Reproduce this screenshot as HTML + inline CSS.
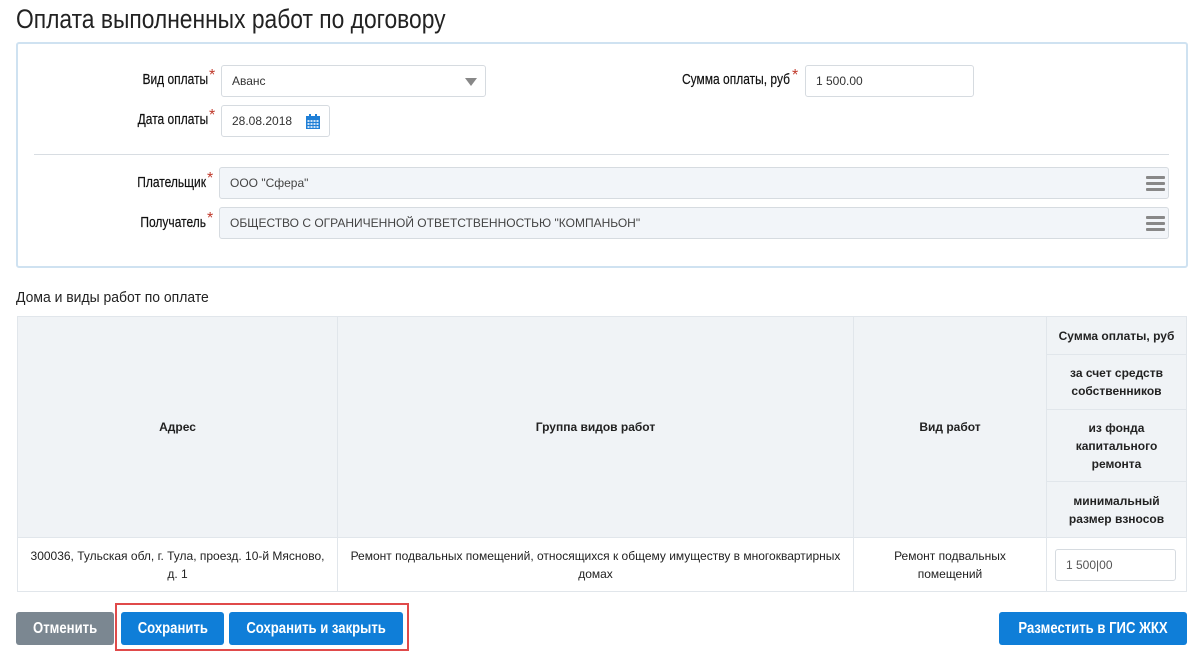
<!DOCTYPE html>
<html><head><meta charset="utf-8"><style>
*{box-sizing:border-box;margin:0;padding:0}
body{width:1201px;height:656px;background:#fff;font-family:"Liberation Sans",sans-serif;color:#222;position:relative;overflow:hidden}
.abs{position:absolute}
.n{display:inline-block;transform:scaleX(.82);transform-origin:left center;white-space:nowrap}
.nr{display:inline-block;transform:scaleX(.8);transform-origin:right center;white-space:nowrap}
.nc{display:inline-block;transform:scaleX(.82);transform-origin:center center;white-space:nowrap}
.lbl{font-size:15px;color:#111;text-align:right;-webkit-text-stroke:0.2px #111}
.st{position:absolute;z-index:5;color:#c0392b;font-size:16px;line-height:16px}
.inp{border:1px solid #d6dbe0;border-radius:3px;background:#fff;font-size:12px;color:#333;padding-left:10px;line-height:30px}
.ro{background:#f2f5f9;border:1px solid #d6dbe0;border-radius:3px;font-size:12px;color:#444;padding-left:10px;line-height:30px}
.ham{position:absolute;right:3px;top:8px;width:19px}
.ham i{display:block;height:3px;background:#888;margin-bottom:3px;border-radius:1px}
table{border-collapse:collapse;position:absolute;left:17px;top:316px;width:1170px}
td{border:1px solid #e1e6eb;text-align:center;font-size:12px;font-weight:bold;color:#222;background:#f0f3f6;line-height:18px}
tr.d td{background:#fff;font-weight:normal;font-size:12px}
.btn{position:absolute;top:612px;height:33px;border-radius:3px;color:#fff;font-size:16px;line-height:33px;text-align:center;font-weight:bold}
</style></head><body>
<div class="abs" style="left:16px;top:3px;font-size:27px;line-height:32px;color:#222"><span class="n" style="transform:scaleX(.845)">Оплата выполненных работ по договору</span></div>
<div class="abs" style="left:16px;top:42px;width:1172px;height:226px;border:2px solid #cfe2f1;border-radius:3px"></div>

<div class="abs lbl" style="left:40px;top:71px;width:168px"><span class="nr">Вид оплаты</span></div>
<div class="abs inp" style="left:221px;top:65px;width:265px;height:32px">Аванс
<div class="abs" style="right:8px;top:12px;width:0;height:0;border-left:6px solid transparent;border-right:6px solid transparent;border-top:8px solid #888"></div></div>
<div class="abs lbl" style="left:40px;top:111px;width:168px"><span class="nr">Дата оплаты</span></div>
<div class="abs inp" style="left:221px;top:105px;width:109px;height:32px">28.08.2018
<svg class="abs" style="left:84px;top:8px" width="14" height="15" viewBox="0 0 14 15"><rect x="0" y="2" width="14" height="13" fill="#1f7fd6"/><rect x="3" y="0" width="2" height="3" fill="#1f7fd6"/><rect x="9" y="0" width="2" height="3" fill="#1f7fd6"/><g fill="#cfe3f7"><rect x="1.5" y="6" width="2" height="2"/><rect x="4.5" y="6" width="2" height="2"/><rect x="7.5" y="6" width="2" height="2"/><rect x="10.5" y="6" width="2" height="2"/><rect x="1.5" y="9" width="2" height="2"/><rect x="4.5" y="9" width="2" height="2"/><rect x="7.5" y="9" width="2" height="2"/><rect x="10.5" y="9" width="2" height="2"/><rect x="1.5" y="12" width="2" height="2"/><rect x="4.5" y="12" width="2" height="2"/><rect x="7.5" y="12" width="2" height="2"/><rect x="10.5" y="12" width="2" height="2"/></g></svg></div>
<div class="abs lbl" style="left:560px;top:71px;width:230px"><span class="nr">Сумма оплаты, руб</span></div>
<div class="abs inp" style="left:805px;top:65px;width:169px;height:32px">1 500.00</div>

<div class="abs" style="left:34px;top:154px;width:1135px;height:1px;background:#d8dde2"></div>

<div class="abs lbl" style="left:40px;top:174px;width:166px"><span class="nr">Плательщик</span></div>
<div class="abs ro" style="left:219px;top:167px;width:950px;height:32px">ООО "Сфера"<div class="ham"><i></i><i></i><i></i></div></div>
<div class="abs lbl" style="left:40px;top:214px;width:166px"><span class="nr">Получатель</span></div>
<div class="abs ro" style="left:219px;top:207px;width:950px;height:32px">ОБЩЕСТВО С ОГРАНИЧЕННОЙ ОТВЕТСТВЕННОСТЬЮ "КОМПАНЬОН"<div class="ham"><i></i><i></i><i></i></div></div>

<span class="st" style="left:209px;top:68px">*</span>
<span class="st" style="left:209px;top:108px">*</span>
<span class="st" style="left:792px;top:68px">*</span>
<span class="st" style="left:207px;top:171px">*</span>
<span class="st" style="left:207px;top:211px">*</span>

<div class="abs" style="left:16px;top:289px;font-size:15px"><span class="n" style="transform:scaleX(.93)">Дома и виды работ по оплате</span></div>

<table>
<tr style="height:38px"><td rowspan="4" style="width:320px">Адрес</td><td rowspan="4" style="width:516px">Группа видов работ</td><td rowspan="4" style="width:193px">Вид работ</td><td>Сумма оплаты, руб</td></tr>
<tr style="height:55px"><td>за счет средств<br>собственников</td></tr>
<tr style="height:72px"><td>из фонда<br>капитального<br>ремонта</td></tr>
<tr style="height:56px"><td>минимальный<br>размер взносов</td></tr>
<tr class="d" style="height:54px"><td>300036, Тульская обл, г. Тула, проезд. 10-й Мясново,<br>д. 1</td><td>Ремонт подвальных помещений, относящихся к общему имуществу в многоквартирных<br>домах</td><td>Ремонт подвальных<br>помещений</td><td><div class="inp" style="width:121px;height:32px;margin-left:8px;text-align:left;color:#555">1 500|00</div></td></tr>
</table>

<div class="btn" style="left:16px;width:98px;background:#7b8791"><span class="nc">Отменить</span></div>
<div class="abs" style="left:115px;top:603px;width:294px;height:48px;border:2px solid #e04a4a"></div>
<div class="btn" style="left:121px;width:103px;background:#0f7ed8"><span class="nc">Сохранить</span></div>
<div class="btn" style="left:229px;width:174px;background:#0f7ed8"><span class="nc">Сохранить и закрыть</span></div>
<div class="btn" style="left:999px;width:188px;background:#0f7ed8"><span class="nc">Разместить в ГИС ЖКХ</span></div>
</body></html>
